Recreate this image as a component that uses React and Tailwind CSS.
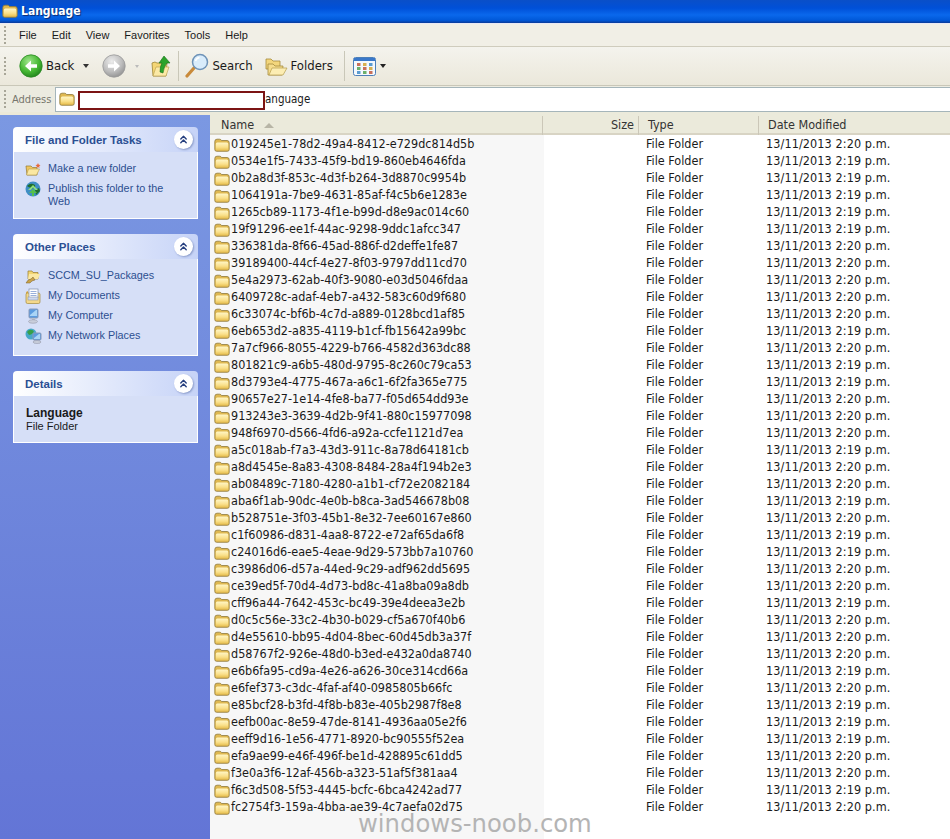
import { ChevronsUp } from 'lucide-react'

const rows = [
  ['019245e1-78d2-49a4-8412-e729dc814d5b', '2:20'],
  ['0534e1f5-7433-45f9-bd19-860eb4646fda', '2:19'],
  ['0b2a8d3f-853c-4d3f-b264-3d8870c9954b', '2:19'],
  ['1064191a-7be9-4631-85af-f4c5b6e1283e', '2:19'],
  ['1265cb89-1173-4f1e-b99d-d8e9ac014c60', '2:19'],
  ['19f91296-ee1f-44ac-9298-9ddc1afcc347', '2:19'],
  ['336381da-8f66-45ad-886f-d2deffe1fe87', '2:20'],
  ['39189400-44cf-4e27-8f03-9797dd11cd70', '2:20'],
  ['5e4a2973-62ab-40f3-9080-e03d5046fdaa', '2:20'],
  ['6409728c-adaf-4eb7-a432-583c60d9f680', '2:20'],
  ['6c33074c-bf6b-4c7d-a889-0128bcd1af85', '2:20'],
  ['6eb653d2-a835-4119-b1cf-fb15642a99bc', '2:19'],
  ['7a7cf966-8055-4229-b766-4582d363dc88', '2:20'],
  ['801821c9-a6b5-480d-9795-8c260c79ca53', '2:19'],
  ['8d3793e4-4775-467a-a6c1-6f2fa365e775', '2:19'],
  ['90657e27-1e14-4fe8-ba77-f05d654dd93e', '2:20'],
  ['913243e3-3639-4d2b-9f41-880c15977098', '2:20'],
  ['948f6970-d566-4fd6-a92a-ccfe1121d7ea', '2:20'],
  ['a5c018ab-f7a3-43d3-911c-8a78d64181cb', '2:19'],
  ['a8d4545e-8a83-4308-8484-28a4f194b2e3', '2:20'],
  ['ab08489c-7180-4280-a1b1-cf72e2082184', '2:20'],
  ['aba6f1ab-90dc-4e0b-b8ca-3ad546678b08', '2:19'],
  ['b528751e-3f03-45b1-8e32-7ee60167e860', '2:20'],
  ['c1f60986-d831-4aa8-8722-e72af65da6f8', '2:19'],
  ['c24016d6-eae5-4eae-9d29-573bb7a10760', '2:19'],
  ['c3986d06-d57a-44ed-9c29-adf962dd5695', '2:20'],
  ['ce39ed5f-70d4-4d73-bd8c-41a8ba09a8db', '2:20'],
  ['cff96a44-7642-453c-bc49-39e4deea3e2b', '2:19'],
  ['d0c5c56e-33c2-4b30-b029-cf5a670f40b6', '2:20'],
  ['d4e55610-bb95-4d04-8bec-60d45db3a37f', '2:20'],
  ['d58767f2-926e-48d0-b3ed-e432a0da8740', '2:20'],
  ['e6b6fa95-cd9a-4e26-a626-30ce314cd66a', '2:19'],
  ['e6fef373-c3dc-4faf-af40-0985805b66fc', '2:20'],
  ['e85bcf28-b3fd-4f8b-b83e-405b2987f8e8', '2:19'],
  ['eefb00ac-8e59-47de-8141-4936aa05e2f6', '2:19'],
  ['eeff9d16-1e56-4771-8920-bc90555f52ea', '2:19'],
  ['efa9ae99-e46f-496f-be1d-428895c61dd5', '2:20'],
  ['f3e0a3f6-12af-456b-a323-51af5f381aa4', '2:20'],
  ['f6c3d508-5f53-4445-bcfc-6bca4242ad77', '2:19'],
  ['fc2754f3-159a-4bba-ae39-4c7aefa02d75', '2:20'],
]

function Folder({ className }) {
  return (
    <svg viewBox="0 0 16 14" className={className}>
      <defs>
        <linearGradient id="folderFill" x1="0" y1="0" x2="0" y2="1">
          <stop offset="0" stopColor="#fff6c6" />
          <stop offset="0.6" stopColor="#fae08a" />
          <stop offset="1" stopColor="#e8c153" />
        </linearGradient>
      </defs>
      <path d="M0.800 11.500V3.500Q0.800 1.200 3 1.200h2.500Q7 1.200 7.500 2.500h5.500Q15.200 2.500 15.200 4.700v6.800q0 1.800-1.800 1.800H2.600q-1.800 0-1.800-1.800z" fill="#dfb850" stroke="#8f7a3c" strokeWidth="0.8" />
      <path d="M1.800 11.500V6q0-1.500 1.500-1.500h9.500q1.500 0 1.500 1.500v5.500q0 .8-.8.8H2.600q-.8 0-.8-.8z" fill="url(#folderFill)" />
    </svg>
  )
}

function Grip() {
  return <div className="h-[18px] w-[2px] shrink-0 bg-[repeating-linear-gradient(to_bottom,#a8a698_0,#a8a698_2px,transparent_2px,transparent_4px)]" />
}

function NavCircle({ gray }) {
  const id = gray ? 'navGray' : 'navGreen'
  return (
    <svg viewBox="0 0 24 24" className="h-[24px] w-[24px] shrink-0">
      <defs>
        <radialGradient id={id} cx="40%" cy="30%" r="75%">
          <stop offset="0" stopColor={gray ? '#ececec' : '#9fe58c'} />
          <stop offset="0.6" stopColor={gray ? '#bdbdbd' : '#46b833'} />
          <stop offset="1" stopColor={gray ? '#8f8f8f' : '#1f7f1c'} />
        </radialGradient>
      </defs>
      <circle cx="12" cy="12" r="11.200" fill={`url(#${id})`} stroke={gray ? '#9a9a9a' : '#2c8a25'} strokeWidth="0.8" />
      {gray ? (
        <path d="M6 10.200h6V6.500l6 5.500-6 5.500v-3.700H6z" fill="#fff" />
      ) : (
        <path d="M18 10.200h-6V6.500L6 12l6 5.500v-3.700h6z" fill="#fff" />
      )}
    </svg>
  )
}

function UpFolder() {
  return (
    <svg viewBox="0 0 20 24" className="h-[24px] w-[20px] shrink-0">
      <path d="M1 9l3-1 2 1h10l-1 13-13 0z" fill="#f4d675" stroke="#9c8436" strokeWidth="0.8" />
      <path d="M2 22l3-9h13l-3 9z" fill="#fbe9a6" stroke="#b59c4a" strokeWidth="0.6" />
      <path d="M9 18q0-6 2-9H8l5-7 6 7h-3q-3 3-4 10z" fill="#2ba32a" stroke="#176e18" strokeWidth="0.6" />
    </svg>
  )
}

function SearchIcon() {
  return (
    <svg viewBox="0 0 24 26" className="h-[26px] w-[24px] shrink-0">
      <path d="M9 15L2 23" stroke="#c98a3a" strokeWidth="3.200" strokeLinecap="round" />
      <circle cx="15" cy="9" r="7.500" fill="#d9ecfb" stroke="#6e93b8" strokeWidth="1.500" />
      <path d="M10.500 8q1-3 4-3.500" stroke="#fff" strokeWidth="1.500" fill="none" />
    </svg>
  )
}

function FoldersIcon() {
  return (
    <svg viewBox="0 0 23 20" className="h-[20px] w-[23px] shrink-0">
      <path d="M1 3h5l2 2h7v8H1z" fill="#f3d67c" stroke="#a48b3c" strokeWidth="0.8" />
      <path d="M3 8h5l2 2h8l-1 9H3z" fill="#f6dd8d" stroke="#a48b3c" strokeWidth="0.8" />
      <path d="M4 19l3-7h15l-4 7z" fill="#fcedb3" stroke="#b59c4a" strokeWidth="0.7" />
    </svg>
  )
}

function ViewsIcon() {
  const dots = ['#c9705a', '#d8b050', '#5b9bd0', '#6bb06b', '#c9705a', '#d8b050', '#5b9bd0', '#6bb06b', '#c9705a']
  return (
    <svg viewBox="0 0 23 19" className="h-[19px] w-[23px] shrink-0">
      <rect x="0.500" y="0.500" width="22" height="18" rx="2" fill="#f4f8fd" stroke="#4d7fb8" />
      <rect x="1" y="1" width="21" height="3" fill="#3a78c9" />
      {dots.map((c, i) => (
        <rect key={i} x={4 + (i % 3) * 6} y={6 + Math.floor(i / 3) * 4} width="3.500" height="3" fill={c} />
      ))}
    </svg>
  )
}

function NewFolderIcon() {
  return (
    <svg viewBox="0 0 16 14" className="h-[14px] w-[16px] shrink-0">
      <path d="M1 4h5l1.500 1.500H12V13H2z" fill="#f0c760" stroke="#94792f" strokeWidth="0.7" />
      <path d="M1.500 13l2-6h11l-3 6z" fill="#fbe8a2" stroke="#b59c4a" strokeWidth="0.6" />
      <path d="M13 1l.8 1.700 1.700.3-1.300 1.200.3 1.800-1.500-.9-1.500.9.300-1.800L10.500 3l1.700-.3z" fill="#e8683a" />
    </svg>
  )
}

function GlobeIcon() {
  return (
    <svg viewBox="0 0 16 16" className="h-[16px] w-[16px] shrink-0">
      <circle cx="8" cy="8" r="7.500" fill="#3f8ec4" />
      <path d="M2 5q3-3 6-2t2 3-4 1-4-2zM10 9l4-2 1 3-4 4z" fill="#1f6e2e" />
      <path d="M8 4l5 5h-2.500l-2.500-2.500L5.500 9H3z" fill="#8fe07d" />
      <path d="M8 8l4 4H9v3H7v-3H4z" fill="#56c04a" />
    </svg>
  )
}

function ShareFolderIcon() {
  return (
    <svg viewBox="0 0 16 16" className="h-[16px] w-[16px] shrink-0">
      <path d="M3 3h4l1 1.500h5V11H3z" fill="#f2d470" stroke="#94792f" strokeWidth="0.7" />
      <path d="M4 6h11l-2 5H3z" fill="#fbe8a2" />
      <path d="M1 15q2-4 5-4l2-2 2 3-3 1-2 2z" fill="#c9a24a" stroke="#7c6226" strokeWidth="0.5" />
    </svg>
  )
}

function DocsIcon() {
  return (
    <svg viewBox="0 0 16 16" className="h-[16px] w-[16px] shrink-0">
      <path d="M1 4l2-1v12h11v-1H2z" fill="#d9a94a" />
      <rect x="1" y="5" width="14" height="10.500" rx="1.500" fill="#f4d88a" stroke="#a48b3c" strokeWidth="0.7" />
      <rect x="4" y="1" width="9" height="9" fill="#fff" stroke="#7f8ea8" strokeWidth="0.7" />
      <path d="M5.500 3.500h6M5.500 5.500h6M5.500 7.500h6" stroke="#7f9bd0" strokeWidth="0.8" />
      <rect x="3" y="9" width="10" height="3" fill="#cfd9ef" stroke="#7f8ea8" strokeWidth="0.5" />
    </svg>
  )
}

function ComputerIcon() {
  return (
    <svg viewBox="0 0 16 16" className="h-[16px] w-[16px] shrink-0">
      <rect x="4" y="1" width="9" height="9" rx="1" fill="#5b9be0" stroke="#8a9ab8" />
      <path d="M5 7l6-5h1v6H5z" fill="#a9d4f6" />
      <rect x="7" y="10" width="3" height="2" fill="#b9bfcc" />
      <ellipse cx="8" cy="13.500" rx="4.500" ry="1.800" fill="#c9cedb" stroke="#8a8fa0" strokeWidth="0.5" />
    </svg>
  )
}

function NetworkIcon() {
  return (
    <svg viewBox="0 0 17 16" className="h-[16px] w-[17px] shrink-0">
      <circle cx="6" cy="6" r="5.500" fill="#47a8c8" />
      <path d="M2 4q2-3 5-2t1 3-4 2z" fill="#37a04a" />
      <rect x="8" y="5" width="8" height="7" rx="1" fill="#5b9be0" stroke="#8a9ab8" />
      <path d="M9 10l5-4h1v5H9z" fill="#a9d4f6" />
      <ellipse cx="12" cy="14" rx="4" ry="1.500" fill="#c9cedb" stroke="#8a8fa0" strokeWidth="0.5" />
    </svg>
  )
}

function Panel({ title, children, bodyClass }) {
  return (
    <section className="w-[185px] overflow-hidden rounded-t-[4px]">
      <div className="flex h-[25px] items-center justify-between bg-gradient-to-r from-white to-[#c6d3f7] pl-[12px] pr-[5px]">
        <h2 className="pt-[3px] font-['Liberation_Sans',sans-serif] text-[11.5px] font-bold text-[#2b4f93]">{title}</h2>
        <span className="flex h-[19px] w-[19px] items-center justify-center rounded-full bg-white shadow-[1px_1px_2px_#8a9bc9]">
          <ChevronsUp size={13} strokeWidth={2.6} className="text-[#27407f]" />
        </span>
      </div>
      <div className={`border border-t-0 border-white bg-[#d6dff7] ${bodyClass}`}>{children}</div>
    </section>
  )
}

function TaskLink({ icon, children }) {
  return (
    <div className="flex items-start gap-[7px] font-['Liberation_Sans',sans-serif] text-[10.8px] leading-[12.5px] text-[#2d4f90]">
      <span className="flex h-[16px] w-[16px] shrink-0 items-center justify-center">{icon}</span>
      <span className="max-w-[122px] pt-[1px]">{children}</span>
    </div>
  )
}

export default function App() {
  return (
    <div className="relative flex h-[839px] w-[950px] flex-col overflow-hidden bg-white font-['DejaVu_Sans_Condensed','Noto_Sans',sans-serif] text-[12.5px] text-[#1a1a1a]">
      {/* title bar */}
      <header className="flex h-[23px] shrink-0 items-center gap-[3px] bg-[linear-gradient(to_bottom,#0a4fc8_0%,#0050d8_35%,#0a68ec_65%,#0058d8_88%,#0a3a98_100%)] pb-[2px] pl-[2px]">
        <Folder className="h-[14px] w-[16px]" />
        <span className="text-[12px] font-bold text-white [text-shadow:1px_1px_1px_#0a2a70]">Language</span>
      </header>

      {/* menu bar */}
      <nav className="flex h-[23px] shrink-0 items-center border-t border-[#e8e8f4] bg-[#f1efe6] pl-[4px] font-['Liberation_Sans',sans-serif] text-[11px]">
        <Grip />
        <div className="ml-[13px] flex gap-[15px]">
          {['File', 'Edit', 'View', 'Favorites', 'Tools', 'Help'].map((m) => (
            <span key={m}>{m}</span>
          ))}
        </div>
      </nav>

      {/* toolbar */}
      <div className="flex h-[40px] shrink-0 items-center border-y border-t-[#cfccbd] border-b-[#c9c7b8] bg-gradient-to-b from-[#f4f3ed] to-[#ebe8db] pl-[4px]">
        <Grip />
        <div className="ml-[13px] flex items-center">
          <NavCircle />
          <span className="ml-[3px] text-[13px]">Back</span>
          <span className="ml-[9px] h-0 w-0 border-x-[3px] border-t-[4px] border-x-transparent border-t-[#333]" />
          <span className="ml-[13px]"><NavCircle gray /></span>
          <span className="ml-[9px] h-0 w-0 border-x-[2px] border-t-[3px] border-x-transparent border-t-[#bbb]" />
          <span className="ml-[12px]"><UpFolder /></span>
          <span className="ml-[7px] h-[30px] w-px bg-[#c9c7b8]" />
          <span className="ml-[6px]"><SearchIcon /></span>
          <span className="ml-[3px] text-[13px]">Search</span>
          <span className="ml-[12px]"><FoldersIcon /></span>
          <span className="ml-[3px] text-[13px]">Folders</span>
          <span className="ml-[11px] h-[30px] w-px bg-[#c9c7b8]" />
          <span className="ml-[8px]"><ViewsIcon /></span>
          <span className="ml-[4px] h-0 w-0 border-x-[3px] border-t-[4px] border-x-transparent border-t-[#222]" />
        </div>
      </div>

      {/* address bar */}
      <div className="flex h-[26px] shrink-0 items-center bg-[#ecebe0] pl-[4px]">
        <Grip />
        <span className="ml-[6px] w-[43px] pt-[2px] text-[11px] text-[#77766c]">Address</span>
        <div className="flex h-[25px] flex-1 items-center border-y border-l border-[#a5b5ba] bg-white pl-[3px]">
          <Folder className="h-[14px] w-[16px] shrink-0" />
          <div className="ml-[3px] mt-[2px] h-[19px] w-[187px] shrink-0 border-2 border-[#7c1414] bg-white" />
          <span className="pt-[2px] text-[11.5px]">anguage</span>
        </div>
      </div>

      <main className="flex min-h-0 flex-1 bg-[#ece9d8]">
        {/* task sidebar */}
        <aside className="mt-[3px] flex w-[210px] shrink-0 flex-col gap-[15px] bg-gradient-to-b from-[#7b98e2] to-[#6375d6] pl-[13px] pt-[12px]">
          <Panel title="File and Folder Tasks" bodyClass="h-[67px] space-y-[4px] pl-[11px] pr-[4px] pt-[9px]">
            <TaskLink icon={<NewFolderIcon />}>Make a new folder</TaskLink>
            <TaskLink icon={<GlobeIcon />}>Publish this folder to the Web</TaskLink>
          </Panel>
          <Panel title="Other Places" bodyClass="h-[97px] space-y-[4px] pl-[11px] pt-[9px]">
            <TaskLink icon={<ShareFolderIcon />}>SCCM_SU_Packages</TaskLink>
            <TaskLink icon={<DocsIcon />}>My Documents</TaskLink>
            <TaskLink icon={<ComputerIcon />}>My Computer</TaskLink>
            <TaskLink icon={<NetworkIcon />}>My Network Places</TaskLink>
          </Panel>
          <Panel title="Details" bodyClass="h-[47px] pl-[12px] pt-[11px] font-['Liberation_Sans',sans-serif] leading-[13px]">
            <div className="text-[12px] font-bold">Language</div>
            <div className="text-[11px]">File Folder</div>
          </Panel>
        </aside>

        {/* file list */}
        <div className="flex min-w-0 flex-1 flex-col">
          <div className="flex h-[23px] shrink-0 items-center border-b-2 border-[#d8d4c4] bg-[#ebeadb] pt-[6px] text-[12.5px] text-[#333]">
            <div className="flex w-[333px] items-center border-r border-[#cbc7b8] pl-[11px]">
              <span>Name</span>
              <span className="ml-[10px] h-0 w-0 border-x-[5px] border-b-[5px] border-x-transparent border-b-[#b8b5a6]" />
            </div>
            <div className="w-[96px] border-r border-[#cbc7b8] pr-[4px] text-right">Size</div>
            <div className="w-[120px] border-r border-[#cbc7b8] pl-[9px]">Type</div>
            <div className="pl-[9px]">Date Modified</div>
          </div>
          <div className="flex-1 bg-[linear-gradient(to_right,#f7f7f7_334px,#ffffff_334px)] pt-px">
            {rows.map(([name, time]) => (
              <div key={name} className="flex h-[17px] items-center whitespace-nowrap">
                <div className="flex w-[333px] items-center pl-[4px]">
                  <Folder className="h-[14px] w-[16px] shrink-0" />
                  <span className="ml-px">{name}</span>
                </div>
                <div className="w-[96px]" />
                <div className="w-[120px] pl-[7px]">File Folder</div>
                <div className="pl-[7px] tracking-[0.1px]">13/11/2013 {time} p.m.</div>
              </div>
            ))}
          </div>
        </div>
      </main>

      {/* site watermark */}
      <div className="absolute bottom-[5px] left-[358px] font-['DejaVu_Sans',sans-serif] text-[24.3px] leading-[20px] text-[#b4b4b4]">windows-noob.com</div>
    </div>
  )
}
